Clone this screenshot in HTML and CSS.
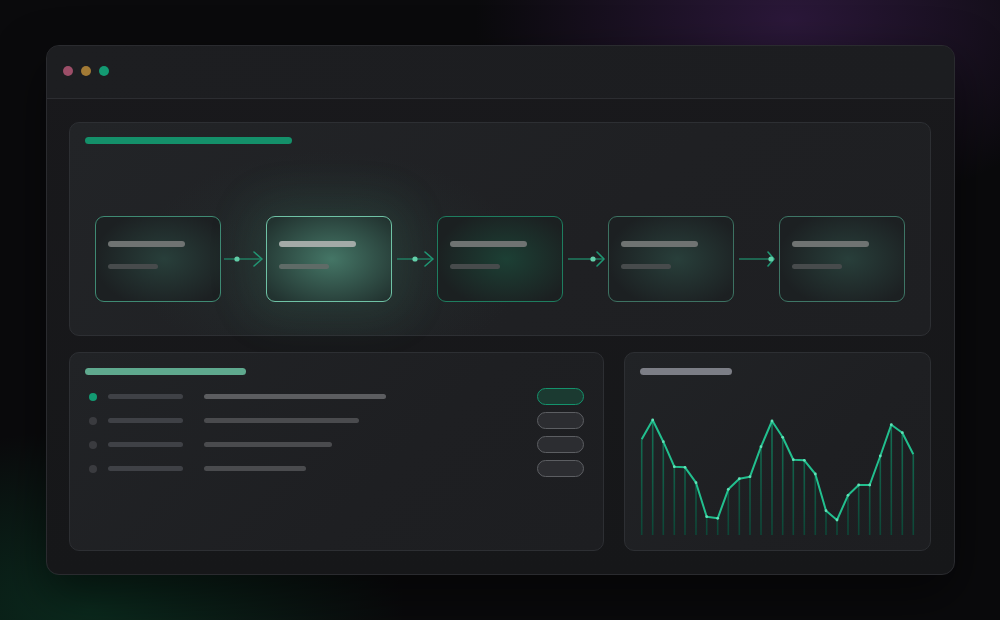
FILE: index.html
```html
<!DOCTYPE html>
<html>
<head>
<meta charset="utf-8">
<link rel="stylesheet" href="styles.css">
</head>
<body>
<div class="stage">
  <div class="window">
    <div class="titlebar">
      <span class="dot dot-red"></span>
      <span class="dot dot-amber"></span>
      <span class="dot dot-green"></span>
    </div>
    <div class="content">
      <section class="panel pipeline">
        <div class="bar bar-title-green"></div>
        <div class="flow">
          <div class="node node-a"><div class="ln ln1"></div><div class="ln ln2"></div></div>
          <svg class="conn" width="45" height="16" viewBox="0 0 45 16"><line x1="3" y1="8" x2="41" y2="8" class="c-line"/><polyline points="33,1 41,8 33,15" class="c-arrow"/><circle cx="16" cy="8" r="2.6" class="c-dot"/></svg>
          <div class="node node-b"><div class="ln ln1"></div><div class="ln ln2"></div></div>
          <svg class="conn" width="45" height="16" viewBox="0 0 45 16"><line x1="5" y1="8" x2="41" y2="8" class="c-line"/><polyline points="33,1 41,8 33,15" class="c-arrow"/><circle cx="23" cy="8" r="2.6" class="c-dot"/></svg>
          <div class="node node-c"><div class="ln ln1"></div><div class="ln ln2"></div></div>
          <svg class="conn" width="45" height="16" viewBox="0 0 45 16"><line x1="5" y1="8" x2="41" y2="8" class="c-line"/><polyline points="34,1 41,8 34,15" class="c-arrow"/><circle cx="30" cy="8" r="2.6" class="c-dot"/></svg>
          <div class="node node-d"><div class="ln ln1"></div><div class="ln ln2"></div></div>
          <svg class="conn" width="45" height="16" viewBox="0 0 45 16"><line x1="5" y1="8" x2="40" y2="8" class="c-line"/><polyline points="34,1 40,8 34,15" class="c-arrow"/><circle cx="37" cy="8" r="2.6" class="c-dot"/></svg>
          <div class="node node-e"><div class="ln ln1"></div><div class="ln ln2"></div></div>
        </div>
      </section>
      <div class="lower">
        <section class="panel list-panel">
          <div class="bar bar-title-mint"></div>
          <div class="rows">
            <div class="row">
              <span class="status on"></span><span class="lbl"></span><span class="val val-1"></span><span class="pill pill-on"></span>
            </div>
            <div class="row">
              <span class="status"></span><span class="lbl"></span><span class="val val-2"></span><span class="pill"></span>
            </div>
            <div class="row">
              <span class="status"></span><span class="lbl"></span><span class="val val-3"></span><span class="pill"></span>
            </div>
            <div class="row">
              <span class="status"></span><span class="lbl"></span><span class="val val-4"></span><span class="pill"></span>
            </div>
          </div>
        </section>
        <section class="panel chart-panel">
          <div class="bar bar-title-gray"></div>
          <svg class="chart" width="276" height="128" viewBox="0 0 276 128">
            <defs>
              <linearGradient id="stemGrad" gradientUnits="userSpaceOnUse" x1="0" y1="0" x2="0" y2="125">
                <stop offset="0" stop-color="#15785a"/>
                <stop offset="1" stop-color="#0d4536"/>
              </linearGradient>
              <marker id="vtx" markerWidth="4" markerHeight="4" refX="2" refY="2" markerUnits="userSpaceOnUse">
                <circle cx="2" cy="2" r="1.4" fill="#5fe2b6"/>
              </marker>
            </defs>
            <g class="stems">
              <line x1="1.7" y1="29.3" x2="1.7" y2="125"/>
              <line x1="12.7" y1="10" x2="12.7" y2="125"/>
              <line x1="23.3" y1="31.7" x2="23.3" y2="125"/>
              <line x1="34.3" y1="56.7" x2="34.3" y2="125"/>
              <line x1="45" y1="57.3" x2="45" y2="125"/>
              <line x1="56" y1="72.7" x2="56" y2="125"/>
              <line x1="66.7" y1="106.7" x2="66.7" y2="125"/>
              <line x1="77.7" y1="108.3" x2="77.7" y2="125"/>
              <line x1="88.3" y1="79.3" x2="88.3" y2="125"/>
              <line x1="99.3" y1="68.7" x2="99.3" y2="125"/>
              <line x1="110" y1="66.7" x2="110" y2="125"/>
              <line x1="121" y1="36.7" x2="121" y2="125"/>
              <line x1="132" y1="11" x2="132" y2="125"/>
              <line x1="142.7" y1="27.3" x2="142.7" y2="125"/>
              <line x1="153.3" y1="49.7" x2="153.3" y2="125"/>
              <line x1="164.3" y1="50.3" x2="164.3" y2="125"/>
              <line x1="175.3" y1="64" x2="175.3" y2="125"/>
              <line x1="186" y1="100.7" x2="186" y2="125"/>
              <line x1="197" y1="110" x2="197" y2="125"/>
              <line x1="208" y1="85.3" x2="208" y2="125"/>
              <line x1="218.7" y1="75" x2="218.7" y2="125"/>
              <line x1="229.7" y1="75" x2="229.7" y2="125"/>
              <line x1="240.3" y1="46" x2="240.3" y2="125"/>
              <line x1="251.3" y1="14.7" x2="251.3" y2="125"/>
              <line x1="262.3" y1="22.7" x2="262.3" y2="125"/>
              <line x1="273.3" y1="44.3" x2="273.3" y2="125"/>
            </g>
            <polyline class="trend" points="1.7,29.3 12.7,10 23.3,31.7 34.3,56.7 45,57.3 56,72.7 66.7,106.7 77.7,108.3 88.3,79.3 99.3,68.7 110,66.7 121,36.7 132,11 142.7,27.3 153.3,49.7 164.3,50.3 175.3,64 186,100.7 197,110 208,85.3 218.7,75 229.7,75 240.3,46 251.3,14.7 262.3,22.7 273.3,44.3"/>
          </svg>
        </section>
      </div>
    </div>
  </div>
</div>
</body>
</html>
```
FILE: styles.css
```css
* { box-sizing: border-box; }
html, body { margin: 0; padding: 0; }
body {
  width: 1000px;
  height: 620px;
  overflow: hidden;
  font-family: "Inter", "Liberation Sans", sans-serif;
  background:
    radial-gradient(ellipse 420px 260px at 790px 20px, rgba(70, 35, 95, 0.55), transparent 75%),
    radial-gradient(ellipse 420px 240px at 90px 610px, rgba(12, 70, 45, 0.55), transparent 75%),
    #0a0a0c;
}
.stage {
  width: 1000px;
  height: 620px;
  display: flex;
  align-items: center;
  justify-content: center;
}
.window {
  width: 909px;
  height: 530px;
  border: 1px solid #2a2b2f;
  border-radius: 13px;
  background: linear-gradient(180deg, #19191c 0%, #161719 100%);
  display: flex;
  flex-direction: column;
  overflow: hidden;
  box-shadow: 0 20px 50px rgba(0, 0, 0, 0.5);
}
.titlebar {
  height: 53px;
  flex: none;
  display: flex;
  align-items: center;
  gap: 8px;
  padding-left: 16px;
  padding-bottom: 2px;
  background: linear-gradient(90deg, #1d1e21, #1c1d20);
  border-bottom: 1px solid #2c2d31;
}
.dot { width: 10px; height: 10px; border-radius: 50%; display: block; }
.dot-red { background: #9c4e68; }
.dot-amber { background: #a27a35; }
.dot-green { background: #139a72; }

.content {
  flex: 1;
  padding: 23px 23px 23px 22px;
  display: flex;
  flex-direction: column;
  gap: 16px;
}
.panel {
  border: 1px solid #2d2f33;
  border-radius: 10px;
  background: linear-gradient(135deg, #212326 0%, #1e1f22 60%, #1d1e21 100%);
}
.bar { height: 7px; border-radius: 4px; }
.bar-title-green { width: 207px; background: #14906a; }
.bar-title-mint { width: 161px; background: #5fa98e; }
.bar-title-gray { width: 92px; background: #7c7e86; }

.pipeline {
  height: 214px;
  flex: none;
  padding: 14px 16px 0 15px;
  background:
    radial-gradient(ellipse 260px 150px at 260px 140px, rgba(50, 90, 80, 0.2), transparent 75%),
    linear-gradient(135deg, #222427 0%, #1f2023 60%, #1e1f22 100%);
}
.flow {
  margin-top: 72px;
  padding-left: 10px;
  display: flex;
  align-items: center;
}
.node {
  width: 126px;
  height: 86px;
  flex: none;
  border-radius: 9px;
  border: 1.5px solid #3b7a67;
  padding: 24px 0 0 12px;
  display: flex;
  flex-direction: column;
  gap: 17px;
  background:
    radial-gradient(ellipse 70px 50px at 55% 50%, rgba(55, 100, 88, 0.45), transparent 100%),
    #1c2022;
}
.ln { border-radius: 3px; }
.ln1 { width: 77px; height: 6px; background: #6f7372; }
.ln2 { width: 50px; height: 5px; background: #474b4c; }
.node-a { border-color: #3f8a73; }
.node-b {
  border-color: #6fc2a5;
  background:
    radial-gradient(ellipse 80px 55px at 52% 50%, rgba(80, 140, 120, 0.75), transparent 100%),
    #223330;
  box-shadow: 0 0 45px 14px rgba(70, 150, 120, 0.16);
}
.node-b .ln1 { background: #a3aaa7; }
.node-b .ln2 { background: #5f6b67; }
.node-c {
  border-color: #1e7d5f;
  background:
    radial-gradient(ellipse 70px 50px at 55% 50%, rgba(30, 95, 72, 0.5), transparent 100%),
    #1b2021;
}
.node-d { border-color: #3d7262; }
.node-e { border-color: #3e7666; }

.conn { flex: none; display: block; }
.c-line { stroke: #1f7d60; stroke-width: 1.3; }
.c-arrow { fill: none; stroke: #1f9673; stroke-width: 1.6; stroke-linecap: round; stroke-linejoin: round; }
.c-dot { fill: #63cfa9; }

.lower {
  flex: 1;
  display: flex;
  gap: 20px;
}
.list-panel {
  width: 535px;
  flex: none;
  padding: 15px 19px 0 15px;
}
.rows {
  margin-top: 13px;
  display: flex;
  flex-direction: column;
  gap: 7px;
}
.row {
  height: 17px;
  display: flex;
  align-items: center;
  padding-left: 4px;
}
.status { width: 8px; height: 8px; border-radius: 50%; background: #3a3b3f; flex: none; }
.status.on { background: #139a72; }
.lbl { width: 75px; height: 5px; border-radius: 3px; background: #3f4146; margin-left: 11px; flex: none; }
.val { height: 5px; border-radius: 3px; background: #4a4b4e; margin-left: 21px; flex: none; }
.val-1 { width: 182px; background: #5c5d60; }
.val-2 { width: 155px; }
.val-3 { width: 128px; }
.val-4 { width: 102px; }
.pill {
  margin-left: auto;
  width: 47px;
  height: 17px;
  border-radius: 9px;
  border: 1.5px solid #5c5e62;
  background: #2c2d31;
  flex: none;
}
.pill-on { border-color: #14926c; background: #1b3a31; }

.chart-panel {
  flex: 1;
  padding: 15px 0 0 15px;
}
.chart { display: block; margin-top: 35px; }
.stems line { stroke: url(#stemGrad); stroke-width: 1.6; }
.trend { fill: none; stroke: #22bf8e; stroke-width: 2; stroke-linejoin: round; marker-mid: url(#vtx); }
```
